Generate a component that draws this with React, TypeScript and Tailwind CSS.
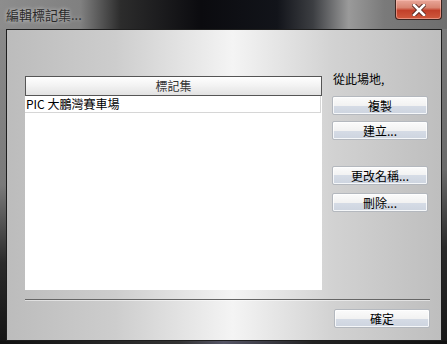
import React from 'react';

const FONT = '"Noto Sans CJK TC", "Noto Sans", sans-serif';

function Btn({ label, className = '' }: { label: string; className?: string }) {
  return (
    <div
      className={`h-[19px] w-[96px] rounded-[2px] border border-[#b4b8be] flex items-center justify-center text-[12px] leading-none text-black bg-[linear-gradient(to_bottom,#fbfbfb_0%,#f2f2f2_50%,#d6dce6_50%,#cdd4df_100%)] shadow-[inset_0_0_0_1px_rgba(255,255,255,0.8)] ${className}`}
    >
      {label}
    </div>
  );
}

export default function App() {
  return (
    <div
      className="w-[447px] h-[344px] overflow-hidden flex flex-col bg-[#3a3a3a]"
      style={{ fontFamily: FONT }}
    >
      {/* title bar */}
      <div className="h-[29px] flex items-start relative bg-[linear-gradient(to_right,#8d8d8d_0%,#808080_18%,#2c2c2c_27%,#0b0b0f_45%,#12141a_62%,#3c3e42_70%,#9a9a9a_78%,#7a7a7a_86%,#6e6e6e_100%)]">
        <span className="pl-[6px] pt-[7px] text-[13px] leading-[16px] text-[#2a2a2a] [text-shadow:0_0_4px_rgba(255,255,255,0.7)]">
          編輯標記集...
        </span>
        <div className="ml-auto mr-[5px] w-[47px] h-[20px] rounded-b-[4px] border border-t-0 border-[#3b2420] flex items-center justify-center bg-[linear-gradient(to_bottom,#e9a799_0%,#d88572_40%,#c2402a_55%,#cf5a3e_100%)] shadow-[inset_0_0_0_1px_rgba(255,200,190,0.5)]">
          <svg width="14" height="12" viewBox="0 0 14 12">
            <path d="M2 1 L12 11 M12 1 L2 11" stroke="#5a2a22" strokeWidth="4.5" strokeLinecap="square" />
            <path d="M2 1 L12 11 M12 1 L2 11" stroke="#ffffff" strokeWidth="2.6" strokeLinecap="square" />
          </svg>
        </div>
      </div>

      <div className="flex flex-1">
        {/* left frame */}
        <div className="w-[6px] bg-[linear-gradient(to_bottom,#8a8a8a_0%,#7a7a7a_50%,#2a2a2a_75%,#151515_100%)]" />

        {/* client */}
        <div className="w-[436px] h-[312px] border border-[#1e1e1e] bg-[linear-gradient(to_right,#bcbcbc_0%,#cdcdcd_25%,#f4f4f4_52%,#d2d2d2_75%,#bebebe_100%)] pl-[18px] pt-[40px] flex flex-col">
          <div className="flex items-start">
            {/* list */}
            <div className="mt-[6px] w-[297px] h-[214px] bg-white flex flex-col">
              <div className="h-[20px] border border-[#555] bg-[linear-gradient(to_bottom,#ffffff_0%,#f2f2f2_50%,#e2e2e2_100%)] flex items-center justify-center text-[12px] text-[#333]">
                標記集
              </div>
              <div className="h-[17px] w-[296px] border-b border-r border-[#d6d6d6] flex items-center pl-[1px] text-[12px] text-black">
                PIC 大鵬灣賽車場
              </div>
            </div>

            {/* side buttons */}
            <div className="ml-[10px] flex flex-col">
              <div className="h-[26px] pl-[1px] pt-[1px] text-[12px] text-black leading-[16px]">從此場地,</div>
              <Btn label="複製" />
              <Btn label="建立..." className="mt-[6px]" />
              <Btn label="更改名稱..." className="mt-[26px]" />
              <Btn label="刪除..." className="mt-[8px]" />
            </div>
          </div>

          <div className="mt-[9px] w-[405px] h-[1px] bg-[#666]" />
          <div className="w-[405px] h-[1px] bg-white/50" />

          <div className="mt-[8px] w-[405px] flex justify-end">
            <Btn label="確定" className="w-[73px]" />
          </div>
        </div>

        {/* right frame */}
        <div className="w-[5px] bg-[linear-gradient(to_bottom,#7a7a7a_0%,#6a6a6a_45%,#2a2a2a_70%,#181818_100%)]" />
      </div>

      <div className="h-[3px] bg-[linear-gradient(to_right,#111_0%,#333_40%,#556_50%,#222_70%,#111_100%)]" />
    </div>
  );
}
